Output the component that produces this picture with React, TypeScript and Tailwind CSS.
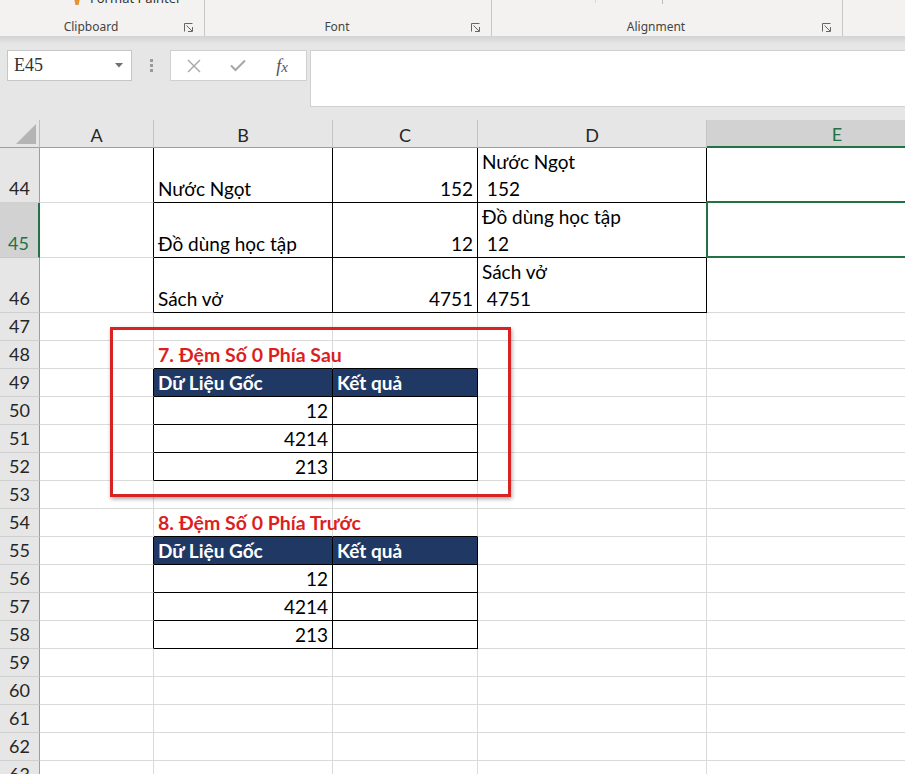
import React from "react";

const W = ["w-[114px]", "w-[179px]", "w-[145px]", "w-[229px]", "w-[260px]"];
const LETTERS = ["A", "B", "C", "D", "E"];

type Cell = { t?: string; lines?: string[]; right?: boolean; head?: boolean; title?: boolean };

const cells: Record<string, Cell> = {
  "44-1": { t: "Nước Ngọt" },
  "44-2": { t: "152", right: true },
  "44-3": { lines: ["Nước Ngọt", "\u00a0152"] },
  "45-1": { t: "Đồ dùng học tập" },
  "45-2": { t: "12", right: true },
  "45-3": { lines: ["Đồ dùng học tập", "\u00a012"] },
  "46-1": { t: "Sách vở" },
  "46-2": { t: "4751", right: true },
  "46-3": { lines: ["Sách vở", "\u00a04751"] },
  "48-1": { t: "7. Đệm Số 0 Phía Sau", title: true },
  "49-1": { t: "Dữ Liệu Gốc", head: true },
  "49-2": { t: "Kết quả", head: true },
  "50-1": { t: "12", right: true },
  "51-1": { t: "4214", right: true },
  "52-1": { t: "213", right: true },
  "54-1": { t: "8. Đệm Số 0 Phía Trước", title: true },
  "55-1": { t: "Dữ Liệu Gốc", head: true },
  "55-2": { t: "Kết quả", head: true },
  "56-1": { t: "12", right: true },
  "57-1": { t: "4214", right: true },
  "58-1": { t: "213", right: true },
};

const ranges = [
  { r1: 44, r2: 46, c1: 1, c2: 3 },
  { r1: 49, r2: 52, c1: 1, c2: 2 },
  { r1: 55, r2: 58, c1: 1, c2: 2 },
];
const isBlack = (r: number, c: number) =>
  ranges.some((g) => r >= g.r1 && r <= g.r2 && c >= g.c1 && c <= g.c2);

const ROWS = Array.from({ length: 20 }, (_, i) => 44 + i);

function Launcher() {
  return (
    <svg width="9" height="9" viewBox="0 0 9 9" fill="none" stroke="#666" strokeWidth="1">
      <path d="M0.5 8.5V0.5H8.5" />
      <path d="M2.5 2.5L8 8" />
      <path d="M4 8.5H8.5V4" />
    </svg>
  );
}

function Group({ w, label }: { w: string; label: string }) {
  return (
    <div className={`${w} shrink-0 h-[36px] flex border-r border-[#c8c6c4]`}>
      <div className="flex-1 flex items-end justify-center pb-[1px] text-[12px] text-[#444] leading-[16px]">
        {label}
      </div>
      <div className="w-[22px] flex items-end justify-start pb-[4px] pl-[2px]">
        <Launcher />
      </div>
    </div>
  );
}

function SheetCell({ r, c }: { r: number; c: number }) {
  const rb = isBlack(r, c) || isBlack(r, c + 1);
  const bb = isBlack(r, c) || isBlack(r + 1, c);
  const cell = cells[`${r}-${c}`];
  const bg = cell?.head ? "bg-[#203864]" : "bg-white";
  return (
    <div
      className={`${W[c]} shrink-0 h-full border-r border-b ${rb ? "border-r-black" : "border-r-[#dadada]"} ${
        bb ? "border-b-black" : "border-b-[#dadada]"
      } ${bg} flex flex-col justify-end overflow-visible whitespace-nowrap`}
    >
      {cell?.lines ? (
        <div className="pl-[4px] text-[19px] leading-[27px] text-black">
          {cell.lines.map((l, i) => (
            <div key={i} className="whitespace-pre">
              {l}
            </div>
          ))}
        </div>
      ) : cell ? (
        <div
          className={`relative z-10 leading-[27px] ${cell.title ? "text-[19.5px]" : "text-[19px]"} ${
            cell.right ? "text-right pr-[4px]" : "pl-[4px]"
          } ${cell.head ? "text-white font-bold" : cell.title ? "text-[#dc1f1f] font-bold" : "text-black"}`}
        >
          {cell.t}
        </div>
      ) : null}
    </div>
  );
}

export default function App() {
  return (
    <div className="w-[905px] h-[774px] overflow-hidden bg-[#e6e6e6] font-['Noto_Sans',sans-serif]">
      {/* Ribbon */}
      <div className="h-[36px] bg-[#f3f2f1] relative overflow-hidden">
        <div className="flex items-center gap-[8px] pl-[72px] mt-[-9px] h-[16px] text-[13px] text-[#333]">
          <svg width="10" height="14" viewBox="0 0 10 14">
            <path d="M2 6 L8 6 L6.5 13 L3.5 13 Z" fill="#e8912d" />
          </svg>
          <span>Format Painter</span>
        </div>
        <div className="absolute left-0 top-0 flex">
          <Group w="w-[205px]" label="Clipboard" />
          <Group w="w-[287px]" label="Font" />
          <Group w="w-[351px]" label="Alignment" />
        </div>
        <div className="absolute left-[595px] top-0 w-px h-[3px] bg-[#d6d6d6]" />
        <div className="absolute left-[662px] top-0 w-px h-[4px] bg-[#bdbdbd]" />
      </div>
      <div className="h-[8px] bg-gradient-to-b from-[#d2d2d2] to-[#e6e6e6]" />

      {/* Formula bar */}
      <div className="h-[76px] flex items-start pt-[6px]">
        <div className="ml-[7px] w-[125px] h-[31px] bg-white border border-[#c6c6c6] flex items-center justify-between pl-[6px] pr-[8px]">
          <span className="font-['Liberation_Serif',serif] text-[18px] text-[#333]">E45</span>
          <svg width="8" height="5" viewBox="0 0 8 5">
            <path d="M0 0 H8 L4 4.5 Z" fill="#707070" />
          </svg>
        </div>
        <div className="w-[38px] h-[31px] flex items-center justify-center">
          <div className="flex flex-col gap-[2px]">
            <div className="w-[3px] h-[3px] bg-[#9a9a9a]" />
            <div className="w-[3px] h-[3px] bg-[#9a9a9a]" />
            <div className="w-[3px] h-[3px] bg-[#9a9a9a]" />
          </div>
        </div>
        <div className="w-[137px] h-[31px] bg-white border border-[#d0d0d0] flex items-center">
          <div className="w-[44px] flex justify-center pl-[2px]">
            <svg width="14" height="14" viewBox="0 0 14 14" stroke="#a6a6a6" strokeWidth="1.4">
              <path d="M1 1 L13 13 M13 1 L1 13" />
            </svg>
          </div>
          <div className="w-[45px] flex justify-center">
            <svg width="16" height="13" viewBox="0 0 16 13" fill="none" stroke="#a6a6a6" strokeWidth="2">
              <path d="M1 6.5 L5.5 11 L15 1.5" />
            </svg>
          </div>
          <div className="flex-1 flex justify-center pr-[2px]">
            <span className="font-['Liberation_Serif',serif] italic text-[18px] text-[#555] leading-none">
              f<span className="text-[15px]">x</span>
            </span>
          </div>
        </div>
        <div className="ml-[3px] flex-1 h-[57px] bg-white border border-[#d0d0d0] border-r-0" />
      </div>

      {/* Grid */}
      <div className="relative font-['Lato',sans-serif]">
        {/* column header */}
        <div className="flex h-[28px]">
          <div className="w-[40px] shrink-0 h-full bg-[#e6e6e6] border-b border-[#9e9e9e] border-r border-r-[#bdbdbd] relative">
            <svg className="absolute left-[16px] top-[4px]" width="20" height="20" viewBox="0 0 20 20">
              <path d="M20 0 V20 H0 Z" fill="#b4b4b4" />
            </svg>
          </div>
          {LETTERS.map((l, c) =>
            c === 4 ? (
              <div
                key={l}
                className={`${W[c]} shrink-0 h-full bg-[#d2d2d2] border-b-2 border-[#217346] flex items-center justify-center pt-[2px] text-[18px] text-[#217346]`}
              >
                {l}
              </div>
            ) : (
              <div
                key={l}
                className={`${W[c]} shrink-0 h-full bg-[#e6e6e6] border-b border-[#9e9e9e] border-r border-r-[#c3c3c3] flex items-center justify-center pt-[3px] text-[18px] text-[#262626]`}
              >
                {l}
              </div>
            )
          )}
        </div>

        {ROWS.map((r) => (
          <div key={r} className={`flex ${r <= 46 ? "h-[55px]" : "h-[28px]"}`}>
            {r === 45 ? (
              <div className="w-[40px] shrink-0 h-full bg-[#d2d2d2] border-b border-[#c8c8c8] border-r-2 border-r-[#217346] flex items-end justify-center pr-[1px] text-[18px] leading-[27px] text-[#217346]">
                {r}
              </div>
            ) : (
              <div className="w-[40px] shrink-0 h-full bg-[#e6e6e6] border-b border-[#d0d0d0] border-r border-r-[#9e9e9e] flex items-end justify-center text-[18px] leading-[27px] text-[#262626]">
                {r}
              </div>
            )}
            {[0, 1, 2, 3, 4].map((c) => (
              <SheetCell key={c} r={r} c={c} />
            ))}
          </div>
        ))}

        {/* red annotation box */}
        <div className="absolute left-[110px] top-[207px] w-[401px] h-[170px] border-[3px] border-[#d92323] shadow-[1px_2px_4px_rgba(0,0,0,0.35)]" />
        {/* selection */}
        <div className="absolute left-[706px] top-[81px] w-[220px] h-[57px] border-2 border-[#217346]" />
      </div>
    </div>
  );
}
